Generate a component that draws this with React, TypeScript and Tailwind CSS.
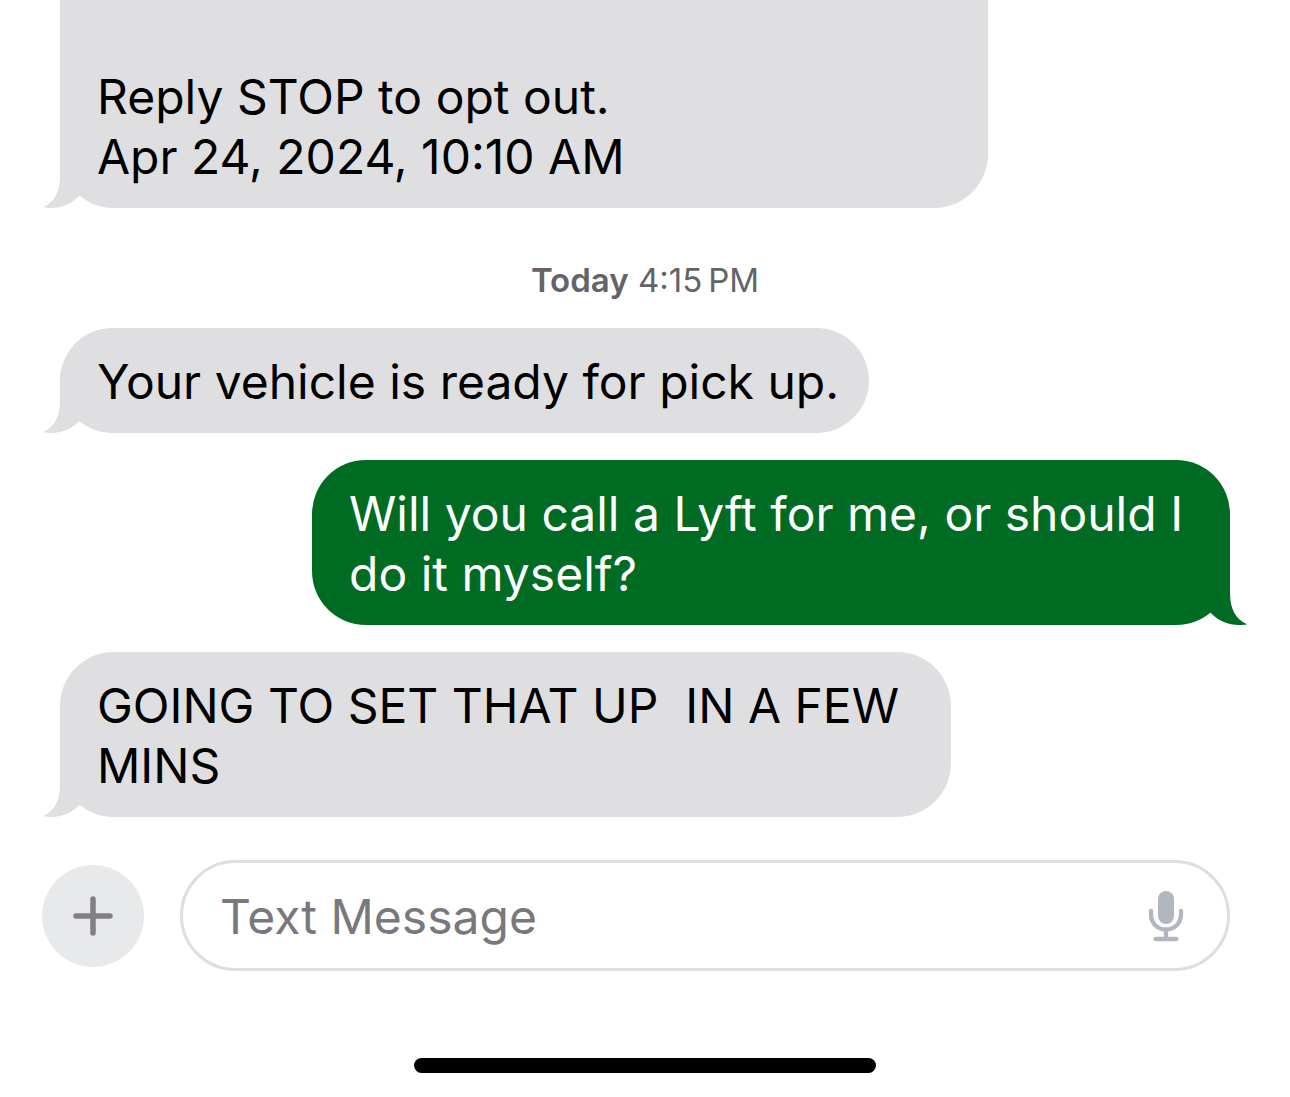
import { clsx } from "clsx";

type Message = {
  id: number;
  text: string;
  sent?: boolean;
  className: string;
};

const conversation: Message[] = [
  {
    id: 1,
    text: "Your vehicle is ready for pick up.",
    className: "w-[809px]",
  },
  {
    id: 2,
    text: "Will you call a Lyft for me, or should I\ndo it myself?",
    sent: true,
    className: "w-[918px]",
  },
  {
    id: 3,
    text: "GOING TO SET THAT UP  IN A FEW\nMINS",
    className: "w-[891px]",
  },
];

function Tail({ sent }: { sent?: boolean }) {
  return (
    <svg
      viewBox="0 0 60 60"
      aria-hidden="true"
      className={clsx(
        "absolute bottom-0 h-[60px] w-[60px]",
        sent ? "-right-[17px] -scale-x-100 fill-[#006b22]" : "-left-[17px] fill-[#dfdfe1]"
      )}
    >
      <path d="M17 0 V28 C17 43 12 54 0 59.3 C1.500 60 5 60 8 60 C19 60 28 56 36 48.200 L60 20 Z" />
    </svg>
  );
}

function Bubble({ text, sent, className }: Omit<Message, "id">) {
  return (
    <div
      className={clsx(
        "relative max-w-full rounded-[54px] px-[37px] pb-[21px] text-5xl leading-[60px] whitespace-pre",
        sent ? "self-end bg-[#006b22] text-white" : "self-start bg-[#dfdfe1] text-black",
        className
      )}
    >
      <Tail sent={sent} />
      <p className="relative">{text}</p>
    </div>
  );
}

function MicIcon() {
  return (
    <svg viewBox="0 0 36 52" aria-hidden="true" className="h-[52px] w-9">
      <rect x="10" y="1" width="16" height="33" rx="8" fill="#b2b7bf" />
      <path
        d="M3 21 V24 C3 33 9 39.500 18 39.500 C27 39.500 33 33 33 24 V21 M18 40 V48 M7.500 49 H28.500"
        fill="none"
        stroke="#b2b7bf"
        strokeWidth="4.3"
        strokeLinecap="round"
      />
    </svg>
  );
}

function Composer() {
  return (
    <form className="mt-[43px] flex items-center gap-9 pr-[60px] pl-[42px]" onSubmit={(e) => e.preventDefault()}>
      <button
        type="button"
        aria-label="Add attachment"
        className="flex size-[102px] shrink-0 items-center justify-center rounded-full bg-[#e8e9eb]"
      >
        <svg viewBox="0 0 40 40" aria-hidden="true" className="size-10">
          <path d="M20 3 V37 M3 20 H37" fill="none" stroke="#808086" strokeWidth="5.5" strokeLinecap="round" />
        </svg>
      </button>
      <div className="flex h-[111px] min-w-0 flex-1 items-center rounded-full border-3 border-[#dedee0] pr-[43px] pl-[37px]">
        <input
          type="text"
          aria-label="Text Message"
          placeholder="Text Message"
          className="min-w-0 flex-1 bg-transparent pt-0.5 text-5xl leading-[60px] text-black outline-none placeholder:text-[#78787d] placeholder:opacity-100"
        />
        <button type="button" aria-label="Dictate" className="shrink-0">
          <MicIcon />
        </button>
      </div>
    </form>
  );
}

export default function App() {
  return (
    <main className="flex min-h-screen flex-col overflow-hidden bg-white font-['Inter',sans-serif]">
      <section aria-label="Messages" className="flex flex-col px-[60px]">
        <Bubble
          text={"Reply STOP to opt out.\nApr 24, 2024, 10:10 AM"}
          className="w-[928px] rounded-t-none pt-[67px]"
        />
        <p className="mt-[52px] mb-[28px] text-center text-[33px] leading-10 text-[#636368]">
          <span className="font-semibold">Today</span> <time>4:15{"\u202f"}PM</time>
        </p>
        <div className="flex flex-col gap-[27px]">
          {conversation.map(({ id, className, ...message }) => (
            <Bubble key={id} {...message} className={clsx("pt-6", className)} />
          ))}
        </div>
      </section>
      <Composer />
      <div className="mx-auto mt-[87px] mb-6 h-[15px] w-[462px] rounded-full bg-black" />
    </main>
  );
}
